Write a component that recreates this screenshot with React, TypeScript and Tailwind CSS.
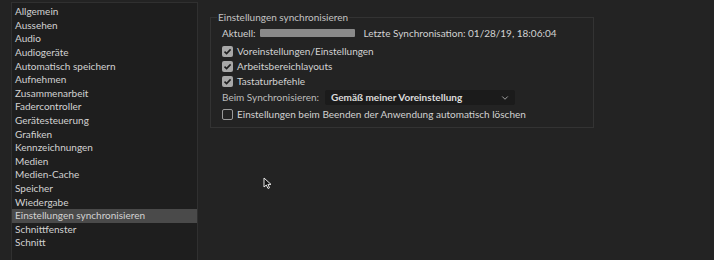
import { ChevronDown } from "lucide-react";

const ITEMS = [
  "Allgemein",
  "Aussehen",
  "Audio",
  "Audiogeräte",
  "Automatisch speichern",
  "Aufnehmen",
  "Zusammenarbeit",
  "Fadercontroller",
  "Gerätesteuerung",
  "Grafiken",
  "Kennzeichnungen",
  "Medien",
  "Medien-Cache",
  "Speicher",
  "Wiedergabe",
  "Einstellungen synchronisieren",
  "Schnittfenster",
  "Schnitt",
];

const SELECTED = "Einstellungen synchronisieren";

function Check({ checked }: { checked: boolean }) {
  if (!checked) {
    return <span className="h-[11px] w-[11px] shrink-0 rounded-[2px] border border-[#9a9a9a]" />;
  }
  return (
    <span className="flex h-[11px] w-[11px] shrink-0 items-center justify-center rounded-[2px] bg-[#a8a8a8]">
      <svg width="9" height="9" viewBox="0 0 9 9">
        <path d="M1.5 4.6 L3.6 6.6 L7.6 2.4" fill="none" stroke="#1e1e1e" strokeWidth="1.6" />
      </svg>
    </span>
  );
}

export default function App() {
  return (
    <div className="relative flex h-[260px] w-[714px] overflow-hidden bg-[#232323] font-['Lato',sans-serif] text-[10px] text-[#d2d2d2]">
      <div className="ml-[11px] mt-[2px] h-[270px] w-[187px] shrink-0 border border-[#303030] bg-[#1e1e1e] pt-[2px]">
        {ITEMS.map((item) => (
          <div
            key={item}
            className={`flex h-[13.6px] items-center pl-[3px] ${item === SELECTED ? "bg-[#4a4a4a]" : ""}`}
          >
            {item}
          </div>
        ))}
      </div>

      <fieldset className="ml-[12px] mt-[10px] h-[118px] w-[384px] border border-[#333333] px-[11px]">
        <legend className="-ml-[5px] px-[1px] text-[#c4c4c4]">Einstellungen synchronisieren</legend>
        <div className="mt-[1px] flex h-[14px] items-center">
          <span>Aktuell:</span>
          <span className="ml-[4px] h-[8px] w-[95px] rounded-[1px] bg-[#8a8a8a] blur-[0.6px]" />
          <span className="ml-[9px]">Letzte Synchronisation: 01/28/19, 18:06:04</span>
        </div>
        <div className="mt-[4px] flex flex-col gap-[1px]">
          {["Voreinstellungen/Einstellungen", "Arbeitsbereichlayouts", "Tastaturbefehle"].map((t) => (
            <label key={t} className="flex h-[14px] items-center gap-[4px]">
              <Check checked />
              <span>{t}</span>
            </label>
          ))}
        </div>
        <div className="mt-[2px] flex items-center">
          <span className="w-[103px] text-[#bdbdbd]">Beim Synchronisieren:</span>
          <div className="flex h-[15px] w-[190px] items-center justify-between rounded-[2px] bg-[#1b1b1b] pl-[6px] pr-[5px]">
            <span className="font-bold text-[#dcdcdc]">Gemäß meiner Voreinstellung</span>
            <ChevronDown className="h-[10px] w-[10px] text-[#bcbcbc]" strokeWidth={2} />
          </div>
        </div>
        <label className="mt-[2px] flex h-[14px] items-center gap-[4px]">
          <Check checked={false} />
          <span>Einstellungen beim Beenden der Anwendung automatisch löschen</span>
        </label>
      </fieldset>

      <svg className="absolute left-[263px] top-[177px]" width="11" height="13" viewBox="0 0 11 13">
        <path d="M1 1 L1 10 L3.3 8 L5 11.5 L6.5 10.8 L4.9 7.4 L8 7.4 Z" fill="#111" stroke="#e6e6e6" strokeWidth="1" />
      </svg>
    </div>
  );
}
